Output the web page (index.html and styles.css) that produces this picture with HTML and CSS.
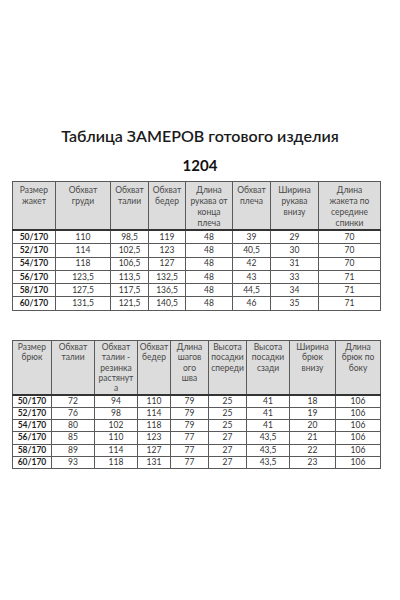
FILE: index.html
```html
<!DOCTYPE html>
<html lang="ru">
<head>
<meta charset="utf-8">
<link rel="stylesheet" href="styles.css">
</head>
<body>
<div class="page">
  <h1 class="title">Таблица ЗАМЕРОВ готового изделия</h1>
  <div class="model">1204</div>

  <table class="grid grid-jacket">
    <colgroup>
      <col style="width:43px"><col style="width:55px"><col style="width:38px"><col style="width:37px">
      <col style="width:47px"><col style="width:38px"><col style="width:48px"><col style="width:62px">
    </colgroup>
    <thead>
      <tr class="head">
        <th>Размер<br>жакет</th><th>Обхват<br>груди</th><th>Обхват<br>талии</th><th>Обхват<br>бедер</th>
        <th>Длина<br>рукава от<br>конца<br>плеча</th><th>Обхват<br>плеча</th><th>Ширина<br>рукава<br>внизу</th><th>Длина<br>жакета по<br>середине<br>спинки</th>
      </tr>
    </thead>
    <tbody>
      <tr><td class="size">50/170</td><td>110</td><td>98,5</td><td>119</td><td>48</td><td>39</td><td>29</td><td>70</td></tr>
      <tr><td class="size">52/170</td><td>114</td><td>102,5</td><td>123</td><td>48</td><td>40,5</td><td>30</td><td>70</td></tr>
      <tr><td class="size">54/170</td><td>118</td><td>106,5</td><td>127</td><td>48</td><td>42</td><td>31</td><td>70</td></tr>
      <tr><td class="size">56/170</td><td>123,5</td><td>113,5</td><td>132,5</td><td>48</td><td>43</td><td>33</td><td>71</td></tr>
      <tr><td class="size">58/170</td><td>127,5</td><td>117,5</td><td>136,5</td><td>48</td><td>44,5</td><td>34</td><td>71</td></tr>
      <tr><td class="size">60/170</td><td>131,5</td><td>121,5</td><td>140,5</td><td>48</td><td>46</td><td>35</td><td>71</td></tr>
    </tbody>
  </table>

  <table class="grid grid-pants">
    <colgroup>
      <col style="width:39px"><col style="width:43px"><col style="width:43px"><col style="width:33px">
      <col style="width:38px"><col style="width:38px"><col style="width:43px"><col style="width:46px"><col style="width:45px">
    </colgroup>
    <thead>
      <tr class="head">
        <th>Размер<br>брюк</th><th>Обхват<br>талии</th><th>Обхват<br>талии -<br>резинка<br>растянут<br>а</th><th>Обхват<br>бедер</th>
        <th>Длина<br>шагов<br>ого<br>шва</th><th>Высота<br>посадки<br>спереди</th><th>Высота<br>посадки<br>сзади</th><th>Ширина<br>брюк<br>внизу</th><th>Длина<br>брюк по<br>боку</th>
      </tr>
    </thead>
    <tbody>
      <tr><td class="size">50/170</td><td>72</td><td>94</td><td>110</td><td>79</td><td>25</td><td>41</td><td>18</td><td>106</td></tr>
      <tr><td class="size">52/170</td><td>76</td><td>98</td><td>114</td><td>79</td><td>25</td><td>41</td><td>19</td><td>106</td></tr>
      <tr><td class="size">54/170</td><td>80</td><td>102</td><td>118</td><td>79</td><td>25</td><td>41</td><td>20</td><td>106</td></tr>
      <tr><td class="size">56/170</td><td>85</td><td>110</td><td>123</td><td>77</td><td>27</td><td>43,5</td><td>21</td><td>106</td></tr>
      <tr><td class="size">58/170</td><td>89</td><td>114</td><td>127</td><td>77</td><td>27</td><td>43,5</td><td>22</td><td>106</td></tr>
      <tr><td class="size">60/170</td><td>93</td><td>118</td><td>131</td><td>77</td><td>27</td><td>43,5</td><td>23</td><td>106</td></tr>
    </tbody>
  </table>
</div>
</body>
</html>
```

FILE: styles.css
```css
html, body {
  margin: 0;
  padding: 0;
  background: #ffffff;
}
body {
  font-family: Lato, "Liberation Sans", sans-serif;
  color: #222;
}
.page {
  width: 400px;
  height: 600px;
  padding-top: 126px;
  box-sizing: border-box;
}
.title {
  margin: 0;
  text-align: center;
  font-size: 16px;
  line-height: 20px;
  font-weight: 600;
  color: #1a1a1a;
}
.model {
  margin-top: 9px;
  text-align: center;
  font-size: 15px;
  line-height: 20px;
  font-weight: 700;
  color: #111;
}
.grid {
  margin-left: 12px;
  border-collapse: collapse;
  table-layout: fixed;
  width: 368px;
  border: 1px solid #4a4a4a;
  font-size: 8.5px;
}
.grid-jacket {
  margin-top: 6px;
}
.grid-pants {
  margin-top: 29px;
}
.grid th, .grid td {
  border: 1px solid #5a5a5a;
  padding: 0;
  text-align: center;
  overflow: hidden;
  white-space: nowrap;
}
.grid th {
  background: #dcdcdc;
  color: #4a4a4a;
  font-weight: 400;
  vertical-align: top;
  line-height: 11px;
  padding: 3px 0 0;
}
.grid thead tr {
  border-bottom: 2px solid #333;
}
.grid-jacket .head {
  height: 46px;
}
.grid-pants .head {
  height: 53px;
}
.grid-pants th {
  line-height: 10.4px;
  padding-top: 1px;
}
.grid td {
  color: #333;
  line-height: 11px;
}
.grid-jacket td {
  height: 12.3px;
}
.grid-pants td {
  height: 11.2px;
}
.grid td.size {
  font-weight: 700;
  color: #1e1e1e;
}
```
